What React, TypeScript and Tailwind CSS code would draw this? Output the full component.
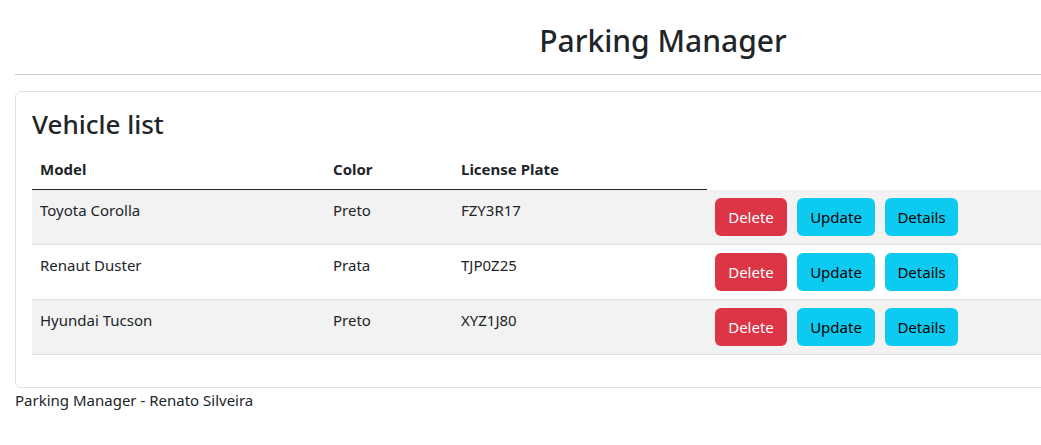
const vehicles = [
  { model: 'Toyota Corolla', color: 'Preto', plate: 'FZY3R17' },
  { model: 'Renaut Duster', color: 'Prata', plate: 'TJP0Z25' },
  { model: 'Hyundai Tucson', color: 'Preto', plate: 'XYZ1J80' },
];

export default function App() {
  return (
    <div className="w-screen overflow-x-hidden bg-white text-[#212529] font-['Segoe_UI','Noto_Sans',sans-serif] text-[15px] leading-6">
      <div className="ml-[15px] w-[1296px]">
        <header>
          <h1 className="pt-[22px] text-center text-[30px] font-medium leading-[38px]">Parking Manager</h1>
          <hr className="mt-[14px] mb-4 border-t border-[#cccccc]" />
        </header>

        <main className="rounded-md border border-[#dee2e6] p-4">
          <h3 className="mb-2 text-[26px] font-medium leading-[33px]">Vehicle list</h3>
          <table className="mb-4 w-full table-fixed">
            <thead>
              <tr>
                <th className="w-[293px] border-b border-[#212529] p-2 text-left font-bold">Model</th>
                <th className="w-[128px] border-b border-[#212529] p-2 text-left font-bold">Color</th>
                <th className="w-[254px] border-b border-[#212529] p-2 text-left font-bold">License Plate</th>
                <th />
              </tr>
            </thead>
            <tbody>
              {vehicles.map((v, i) => (
                <tr key={v.plate} className={i % 2 === 0 ? 'bg-[#f2f2f2]' : 'bg-white'}>
                  <td className="border-b border-[#dee2e6] p-2 align-top">{v.model}</td>
                  <td className="border-b border-[#dee2e6] p-2 align-top">{v.color}</td>
                  <td className="border-b border-[#dee2e6] p-2 align-top">{v.plate}</td>
                  <td className="border-b border-[#dee2e6] p-2 align-top">
                    <div className="flex gap-[10px]">
                      <button className="h-[38px] w-[72px] rounded-md bg-[#dc3545] text-white">Delete</button>
                      <button className="h-[38px] w-[78px] rounded-md bg-[#0dcaf0] text-black">Update</button>
                      <button className="h-[38px] w-[73px] rounded-md bg-[#0dcaf0] text-black">Details</button>
                    </div>
                  </td>
                </tr>
              ))}
            </tbody>
          </table>
        </main>

        <footer>Parking Manager - Renato Silveira</footer>
      </div>
    </div>
  );
}
